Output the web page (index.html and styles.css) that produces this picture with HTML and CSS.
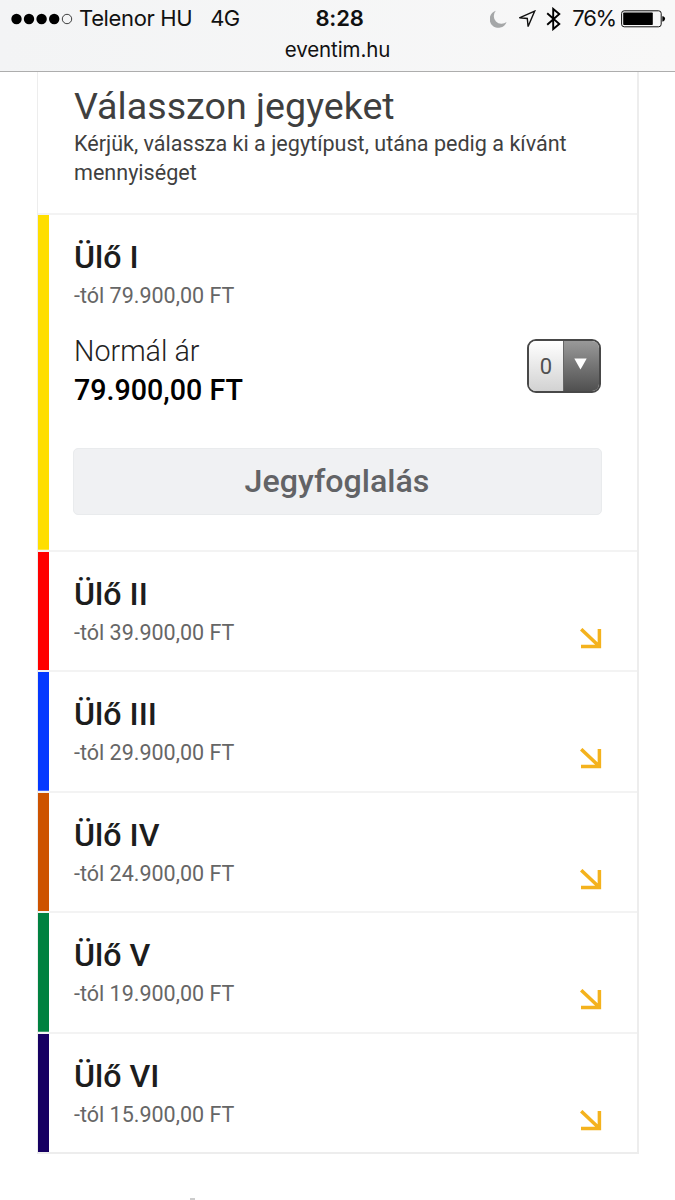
FILE: index.html
```html
<!DOCTYPE html>
<html lang="hu">
<head>
<meta charset="utf-8">
<meta name="viewport" content="width=device-width">
<title>eventim.hu</title>
<link rel="stylesheet" href="styles.css">
</head>
<body>
<header class="browser-bar">
  <div class="status">
    <div class="status-left">
      <svg class="signal" width="62" height="12" viewBox="0 0 62 12"><circle cx="5.5" cy="6" r="5.2"/><circle cx="18" cy="6" r="5.2"/><circle cx="30.6" cy="6" r="5.2"/><circle cx="43.2" cy="6" r="5.2"/><circle cx="56" cy="6" r="4.7" fill="none" stroke="#111" stroke-width="0.8"/></svg>
      <span class="carrier">Telenor HU</span>
      <span class="network">4G</span>
    </div>
    <div class="clock">8:28</div>
    <div class="status-right">
      <svg class="moon" width="17" height="18" viewBox="0 0 17 18"><path d="M5.8.8A8.7 8.7 0 1 0 16.6 12A7.8 7.8 0 0 1 5.8.8Z" fill="#a5a7a8"/></svg>
      <svg class="location" width="18" height="18" viewBox="0 0 18 18"><path d="M1.4 7.8L16.7 1.1L10.1 16.6L9.3 8.5Z" fill="none" stroke="#111" stroke-width="1.4" stroke-linejoin="miter"/></svg>
      <svg class="bluetooth" width="15" height="24" viewBox="0 0 15 24"><path d="M1.2 6.2L13.3 17L7.2 22.1V1.9L13.3 7L1.2 17.8" fill="none" stroke="#000" stroke-width="1.9"/></svg>
      <span class="percent">76%</span>
      <svg class="battery" width="45" height="18" viewBox="0 0 45 18"><rect x=".6" y=".8" width="39.6" height="16" rx="2.6" fill="none" stroke="#111" stroke-width="1"/><rect x="2.2" y="2.5" width="29.6" height="12.6" rx=".8"/><path d="M41.3 6.2h.8q2 .8 2 2.6t-2 2.6h-.8z"/></svg>
    </div>
  </div>
  <div class="address">eventim.hu</div>
</header>
<main class="panel">
  <section class="intro">
    <h1>Válasszon jegyeket</h1>
    <p class="intro-line">Kérjük, válassza ki a jegytípust, utána pedig a kívánt<br>mennyiséget</p>
  </section>
  <section class="category open yellow">
    <h2>Ülő I</h2>
    <p class="from">-tól 79.900,00 FT</p>
    <div class="ticket">
      <div>
        <p class="kind">Normál ár</p>
        <p class="price">79.900,00 FT</p>
      </div>
      <div class="quantity">
        <span class="count">0</span>
        <span class="toggle"><svg width="13" height="12" viewBox="0 0 13 12"><path d="M.3.5h12.4L6.5 11.5z" fill="#fff"/></svg></span>
      </div>
    </div>
    <button class="book">Jegyfoglalás</button>
  </section>
  <section class="category red"><div><h2>Ülő II</h2><p class="from">-tól 39.900,00 FT</p></div><svg class="arrow" viewBox="0 0 22 21"><path d="M1.2 1.2L19 18M1 18.4H19.4V1"/></svg></section>
  <section class="category blue"><div><h2>Ülő III</h2><p class="from">-tól 29.900,00 FT</p></div><svg class="arrow" viewBox="0 0 22 21"><path d="M1.2 1.2L19 18M1 18.4H19.4V1"/></svg></section>
  <section class="category orange"><div><h2>Ülő IV</h2><p class="from">-tól 24.900,00 FT</p></div><svg class="arrow" viewBox="0 0 22 21"><path d="M1.2 1.2L19 18M1 18.4H19.4V1"/></svg></section>
  <section class="category green"><div><h2>Ülő V</h2><p class="from">-tól 19.900,00 FT</p></div><svg class="arrow" viewBox="0 0 22 21"><path d="M1.2 1.2L19 18M1 18.4H19.4V1"/></svg></section>
  <section class="category navy"><div><h2>Ülő VI</h2><p class="from">-tól 15.900,00 FT</p></div><svg class="arrow" viewBox="0 0 22 21"><path d="M1.2 1.2L19 18M1 18.4H19.4V1"/></svg></section>
</main>
<div class="next-section"></div>
</body>
</html>
```
FILE: styles.css
```css
* { box-sizing: border-box; }
body { margin: 0; height: 1200px; overflow: hidden; background: #fff; font-family: Roboto, sans-serif; color: #3f3f3f; }
h1, h2, p { margin: 0; font-weight: 400; white-space: nowrap; }
svg { display: block; flex: none; }

.browser-bar { height: 72px; background: linear-gradient(90deg, #f3f4f5, #f8f8f8); border-bottom: 1px solid #adadad; color: #111; font-family: Inter, sans-serif; }
.status { display: grid; grid-template-columns: 1fr auto 1fr; height: 37px; align-items: center; font-size: 22px; line-height: 26px; }
.status-left { display: flex; align-items: center; padding-left: 11px; }
.carrier { margin-left: 6px; letter-spacing: -.35px; padding-bottom: 1px; }
.network { margin-left: 18px; letter-spacing: -.7px; padding-bottom: 1px; }
.clock { font-weight: 600; letter-spacing: -.2px; padding: 0 0 2px 4px; }
.status-right { display: flex; align-items: center; justify-content: flex-end; padding-right: 9px; }
.location { margin-left: 11px; }
.bluetooth { margin-left: 10px; }
.percent { margin-left: 11px; margin-right: 5px; letter-spacing: -1.2px; padding-bottom: 1px; }
.address { text-align: center; font-size: 20.5px; line-height: 26px; letter-spacing: -.1px; }

.panel { margin: 0 36px 0 37px; width: 602px; border: solid #ededed; border-width: 0 2px 2px 1px; }
.intro { height: 141px; padding: 12px 0 0 36px; }
.intro h1 { font-size: 37.65px; line-height: 45px; }
.intro-line { font-size: 21.57px; line-height: 29px; }

.category { display: flex; justify-content: space-between; height: 120.5px; padding: 23px 35px 0 36px; border-top: 2px solid #f3f3f3; background: linear-gradient(var(--stripe), var(--stripe)) left / 11px 100% no-repeat padding-box; }
.open { display: block; height: 336.5px; }
.category h2 { font-size: 32.2px; line-height: 38px; font-weight: 500; color: #1d1d1d; }
.from { font-size: 21.5px; line-height: 26px; margin-top: 7px; color: #666; }
.yellow { --stripe: #ffde00; }
.red { --stripe: #f00; }
.blue { --stripe: #0539ff; }
.orange { --stripe: #cd5300; }
.green { --stripe: #008140; }
.navy { --stripe: #160062; }
.arrow { width: 22px; height: 21px; margin-top: 53px; fill: none; stroke: #f4b21d; stroke-width: 3.5; }

.ticket { display: flex; justify-content: space-between; align-items: flex-start; height: 121px; padding: 24px 1px 0 0; }
.kind { font-size: 28.7px; line-height: 36px; font-weight: 300; color: #222; }
.price { font-size: 28.65px; line-height: 36px; margin-top: 3px; font-weight: 500; color: #000; }
.quantity { display: flex; width: 74px; height: 54px; margin-top: 6px; border: 2px solid #484848; border-radius: 9px; overflow: hidden; }
.count { width: 35px; display: flex; align-items: center; justify-content: center; font-size: 22px; color: #505050; background: linear-gradient(#fff, #d2d2d2); border-right: 1px solid #666; }
.toggle { flex: 1; display: flex; align-items: center; justify-content: center; padding: 0 3px 4px 0; background: linear-gradient(#999, #505050); }
.book { display: block; width: 529px; height: 67px; margin: 18px 0 0 -1px; padding: 0 1px 2px 0; border: 1px solid #e9ebed; border-radius: 5px; background: #f0f1f3; font: 500 32.2px/62px Roboto, sans-serif; color: #626366; }
.next-section { width: 5px; height: 2px; margin: 44px 0 0 190px; background: #ccc; }
```
